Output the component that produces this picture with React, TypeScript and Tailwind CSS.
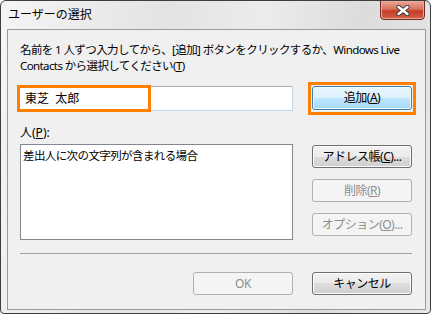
import React from "react";

const font = { fontFamily: '"Noto Sans", "Noto Sans CJK JP", sans-serif' };

function Btn({ children, kind = "normal", className = "" }: { children: React.ReactNode; kind?: "normal" | "default" | "disabled"; className?: string }) {
    let look = "border-[#707070] bg-[linear-gradient(#f2f2f2,#ebebeb_50%,#dddddd_50%,#cfcfcf)] shadow-[inset_0_0_0_1px_#fbfbfb] text-black";
    if (kind == "default") {
        look = "border-[#3c7fb1] bg-[linear-gradient(#eaf6fd,#d9f0fc_50%,#bee6fd_50%,#a7d9f5)] shadow-[inset_0_0_0_1px_#f2fafe] text-black";
    }
    if (kind == "disabled") {
        look = "border-[#adb2b5] bg-[#f4f4f4] text-[#8d8d8d]";
    }
    return (
        <div className={`w-[100px] h-[23px] rounded-[3px] border flex items-center justify-center text-[12px] leading-[16px] tracking-[-0.5px] ${look} ${className}`}>
            {children}
        </div>
    );
}

export default function App() {
    return (
        <div className="w-[433px] h-[317px] bg-white" style={font}>
            <div className="w-[431px] h-[314px] border border-[#3e3e3e] rounded-t-[6px] rounded-b-[4px] overflow-hidden bg-[linear-gradient(100deg,#f5f5f5,#e3e3e3_35%,#ececec_55%,#dcdcdc_75%,#e8e8e8)] flex flex-col">
                {/* title bar */}
                <div className="h-[28px] flex justify-between items-start shrink-0">
                    <div className="ml-[7px] mt-[6px] text-[12px] leading-[16px] text-black">ユーザーの選択</div>
                    <div className="-mt-px mr-[5px] w-[45px] h-[20px] rounded-b-[4px] border border-[#6e2c22] bg-[linear-gradient(#e8a797,#d9735f_45%,#c63b26_55%,#d4604a)] shadow-[inset_0_0_0_1px_#eea99a] flex items-center justify-center">
                        <svg width="14" height="11" viewBox="0 0 14 11">
                            <path d="M2.5 2 L11.5 9 M11.5 2 L2.5 9" stroke="#3a3a3a" strokeWidth="4.2" strokeLinecap="round" />
                            <path d="M2.5 2 L11.5 9 M11.5 2 L2.5 9" stroke="#ffffff" strokeWidth="2.4" strokeLinecap="round" />
                        </svg>
                    </div>
                </div>

                {/* client */}
                <div className="ml-[6px] mr-[4px] mb-[3px] flex-1 border border-[#9a9a9a] bg-[#f0f0f0] relative">
                    <div className="pl-[12px] pt-[12px] text-[11.5px] leading-[16px] tracking-[-0.6px] text-black">
                        <div>名前を 1 人ずつ入力してから、[追加] ボタンをクリックするか、Windows Live</div>
                        <div>Contacts から選択してください(<span className="underline">T</span>)</div>
                    </div>

                    <div className="flex items-start mt-[12px]">
                        <div className="ml-[11px] w-[274px] h-[25px] bg-white border border-[#c5d8e8] border-t-[#abadb3] flex items-center pl-[5px] text-[12px] leading-[16px] text-black">
                            東芝&nbsp;&nbsp;太郎
                        </div>
                        <Btn kind="default" className="ml-[19px] h-[24px]">
                            追加(<span className="underline">A</span>)
                        </Btn>
                    </div>

                    <div className="ml-[12px] mt-[14px] text-[12px] leading-[16px] text-black">
                        人(<span className="underline">P</span>):
                    </div>

                    <div className="flex items-start mt-[3px]">
                        <div className="ml-[12px] w-[273px] h-[96px] bg-white border border-[#828790] px-[2px] py-[3px] text-[11.5px] leading-[16px] tracking-[-0.6px] text-black">
                            差出人に次の文字列が含まれる場合
                        </div>
                        <div className="ml-[19px] mt-px flex flex-col gap-[11px]">
                            <Btn>
                                アドレス帳(<span className="underline">C</span>)...
                            </Btn>
                            <Btn kind="disabled">
                                削除(<span className="underline">R</span>)
                            </Btn>
                            <Btn kind="disabled">
                                オプション(<span className="underline">O</span>)...
                            </Btn>
                        </div>
                    </div>

                    <div className="ml-[12px] mt-[13px] w-[392px] border-t border-[#a0a0a0]" />

                    <div className="flex mt-[18px] ml-[185px] gap-[19px]">
                        <Btn kind="disabled">OK</Btn>
                        <Btn>キャンセル</Btn>
                    </div>

                    {/* orange highlight marks */}
                    <div className="absolute left-[9px] top-[55px] w-[134px] h-[27px] border-[3px] border-[#ff8000]" />
                    <div className="absolute left-[300px] top-[52px] w-[108px] h-[33px] border-[3px] border-[#ff8000]" />
                </div>
            </div>
        </div>
    );
}
